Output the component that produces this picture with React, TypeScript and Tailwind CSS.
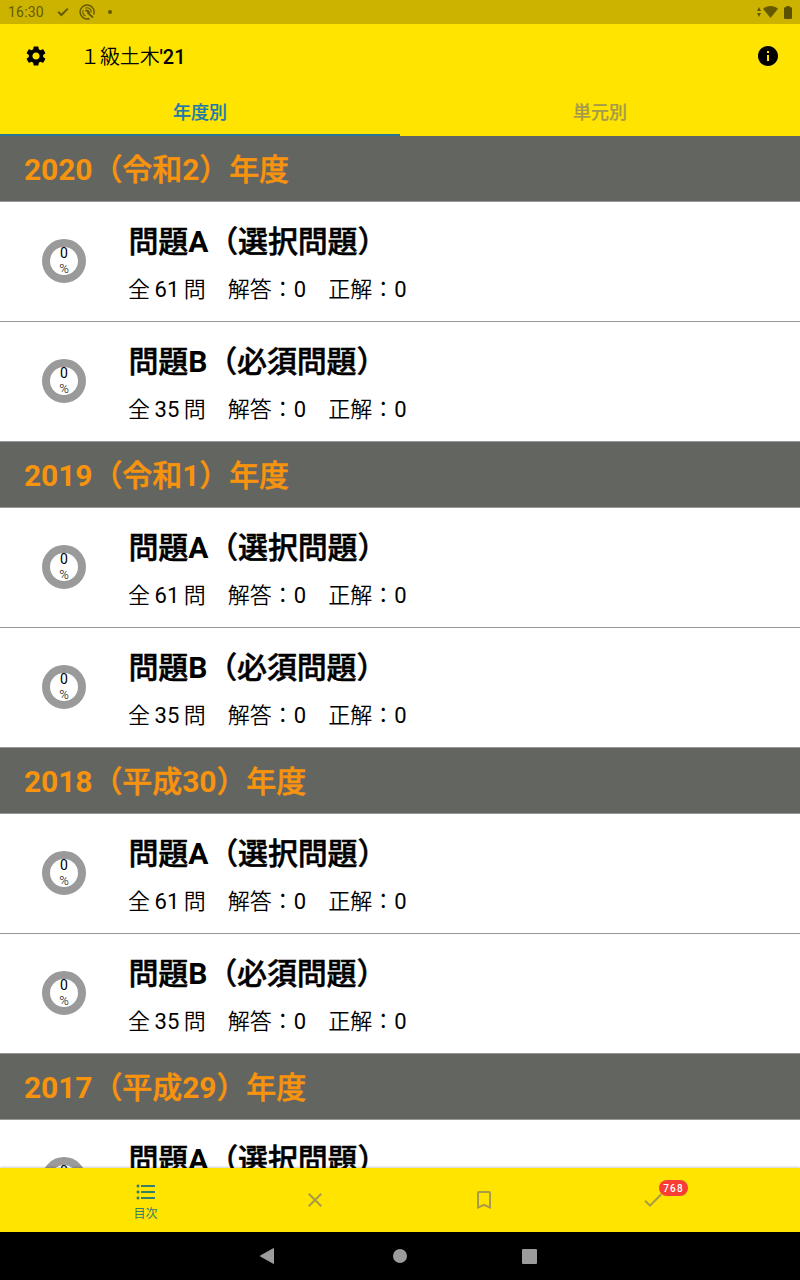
import { MdSettings, MdInfo, MdFormatListBulleted, MdClose, MdBookmarkBorder, MdCheck } from "react-icons/md";

const years = [
  { id: 2020, before: "2020", open: "（令和", num: "2", close: "）年度" },
  { id: 2019, before: "2019", open: "（令和", num: "1", close: "）年度" },
  { id: 2018, before: "2018", open: "（平成", num: "30", close: "）年度" },
  { id: 2017, before: "2017", open: "（平成", num: "29", close: "）年度" },
];

const exams = [
  { letter: "A", kind: "（選択問題）", total: 61 },
  { letter: "B", kind: "（必須問題）", total: 35 },
];

function StatusBar() {
  return (
    <div className="flex h-6 shrink-0 items-center bg-[#ccb300] pl-2 pr-2 text-[#665a00]">
      <span className="w-[49px] text-[14px] tracking-[0.2px]">16:30</span>
      <svg width="12" height="10" viewBox="0 0 12 10" fill="none" stroke="currentColor" strokeWidth="2">
        <path d="M1.2 4.8l3.2 3.2L10.8 1.6" />
      </svg>
      <svg className="ml-[10px]" width="16" height="16" viewBox="0 0 16 16" fill="none" stroke="currentColor">
        <path d="M10.500 14.500A7 7 0 1 1 14.600 10.500" strokeWidth="1.5" />
        <path d="M6.500 11.900A4.200 4.200 0 0 1 4.300 6M6.200 4.200A4.200 4.200 0 0 1 12.200 8.500" strokeWidth="1.1" />
        <path d="M5.800 6.500a3 3 0 0 1 4.800 3.500z" fill="currentColor" stroke="none" />
        <path d="M8.500 8.500l5.500 5" strokeWidth="1.700" />
      </svg>
      <span className="ml-[13px] size-1 rounded-full bg-[#665a00]" />
      <svg className="ml-auto" width="4" height="10" viewBox="0 0 4 10" fill="currentColor">
        <path d="M2 0l2 4H0zM2 10l2-4H0z" />
      </svg>
      <svg className="ml-[2px]" width="15" height="12" viewBox="0 0 15 12" fill="#665a00">
        <path d="M7.5 12L0 2.8C4.4-.9 10.6-.9 15 2.8z" />
      </svg>
      <svg className="ml-[6px]" width="8" height="13" viewBox="0 0 8 13" fill="#5c5100">
        <path d="M2.3 0h3.4v1.3H7a1 1 0 0 1 1 1V12a1 1 0 0 1-1 1H1a1 1 0 0 1-1-1V2.300a1 1 0 0 1 1-1h1.300z" />
      </svg>
    </div>
  );
}

function ExamRow({ letter, kind, total }: { letter: string; kind: string; total: number }) {
  return (
    <div className="flex h-[120px] border-b border-[#979797] bg-white pl-[42px]">
      <div className="mt-[37px] flex size-11 shrink-0 flex-col items-center rounded-full border-8 border-[#9a9a9a] text-black">
        <span className="-mt-0.5 text-[14px] leading-4">0</span>
        <span className="text-[13px] font-light leading-4">%</span>
      </div>
      <div className="ml-[42px] pt-[18px] text-black">
        <div className="pl-[0.5px] text-[30px] font-medium leading-[44px] tracking-[-0.15px] [-webkit-text-stroke:0.5px_currentColor]">
          問題<span className="font-bold [-webkit-text-stroke:0]">{letter}</span>{kind}
        </div>
        <div className="mt-[10px] text-[22px] font-[350] leading-[32px] [word-spacing:-0.8px]">
          全 <span className="font-normal">{total}</span> 問　解答：<span className="font-normal">0</span>　正解：<span className="font-normal">0</span>
        </div>
      </div>
    </div>
  );
}

export default function App() {
  return (
    <div className="flex h-[1280px] w-[800px] flex-col overflow-hidden bg-white font-['Roboto','Noto_Sans_CJK_JP',sans-serif]">
      <StatusBar />
      <header className="shrink-0 bg-[#ffe400]">
        <div className="flex h-16 items-center px-6">
          <MdSettings size={24} />
          <h1 className="ml-8 mt-0.5 text-[20px] font-[350] tracking-[-0.1px]">
            １級土木<span className="font-medium">'21</span>
          </h1>
          <MdInfo size={24} className="-mr-1 ml-auto" />
        </div>
        <div className="flex h-12 text-center text-[18px] font-medium">
          <div className="flex-1 border-b-2 border-[#2a7494] pt-0.5 leading-[44px] text-[#2079ae] [-webkit-text-stroke:0.2px_currentColor]">
            <span className="relative top-px">年度別</span>
          </div>
          <div className="flex-1 pt-0.5 leading-[44px] text-[#a59a4c] [-webkit-text-stroke:0.2px_currentColor]">
            <span className="relative top-px">単元別</span>
          </div>
        </div>
      </header>

      <main className="min-h-0 flex-1 overflow-hidden">
        {years.map((y) => (
          <section key={y.id}>
            <h2 className="h-[66px] border-b border-[#979797] bg-[#636561] pl-6 pt-0.5 text-[30px] font-medium leading-[64px] tracking-[-0.1px] text-[#f8930d] [-webkit-text-stroke:0.5px_currentColor]">
              <span className="font-bold [-webkit-text-stroke:0]">{y.before}</span>
              {y.open}
              <span className="font-bold [-webkit-text-stroke:0]">{y.num}</span>
              {y.close}
            </h2>
            {exams.map((e) => (
              <ExamRow key={e.letter} {...e} />
            ))}
          </section>
        ))}
      </main>

      {/* bottom tabs */}
      <nav className="z-10 flex h-16 shrink-0 justify-center bg-[#ffe400] pr-0.5 text-[#a99a48] shadow-[0_-1px_2px_rgba(0,0,0,0.2)]">
        <div className="flex w-[169px] flex-col items-center pt-3 text-[#387d68]">
          <MdFormatListBulleted size={24} />
          <span className="mt-px text-[12px] leading-[18px]">目次</span>
        </div>
        <div className="flex w-[169px] items-center justify-center">
          <MdClose size={24} />
        </div>
        <div className="flex w-[169px] items-center justify-center">
          <MdBookmarkBorder size={24} />
        </div>
        <div className="flex w-[169px] items-center justify-center">
          <div className="relative">
            <MdCheck size={24} />
            <span className="absolute -top-2 left-[18px] h-4 w-[29px] rounded-full bg-[#f83c36] pl-px text-center text-[10px] font-medium leading-[17px] tracking-[1.2px] text-white">
              768
            </span>
          </div>
        </div>
      </nav>

      {/* android navigation */}
      <div className="z-10 flex h-12 shrink-0 items-center justify-center bg-black pr-[3px] text-[#9b9b9b]">
        <svg width="14" height="16" viewBox="0 0 14 16" fill="currentColor">
          <path d="M14 .7v14.600a.5.5 0 0 1-.8.500L.3 8.500a.6.6 0 0 1 0-1L13.200.200a.5.5 0 0 1 .8.500z" />
        </svg>
        <span className="ml-[119px] size-[14px] rounded-full bg-[#9b9b9b]" />
        <span className="ml-[115px] size-[15px] rounded-[1px] bg-[#9b9b9b]" />
      </div>
    </div>
  );
}
